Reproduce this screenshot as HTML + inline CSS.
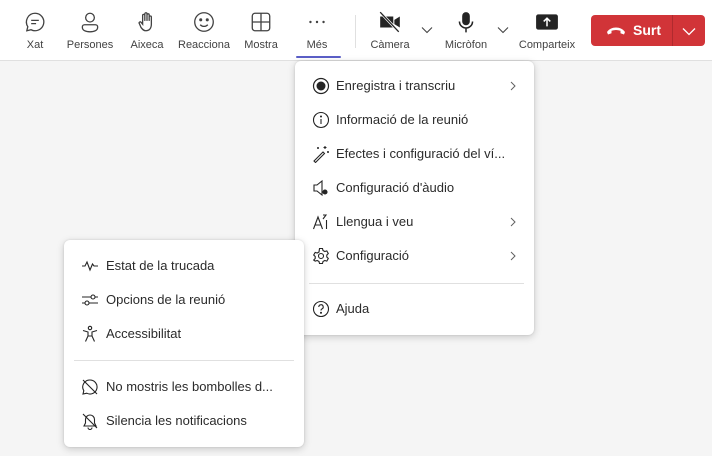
<!DOCTYPE html>
<html><head><meta charset="utf-8"><style>
*{box-sizing:border-box;margin:0;padding:0}
body{width:712px;height:456px;background:#f5f5f5;font-family:"Liberation Sans",sans-serif;color:#242424;position:relative;overflow:hidden}
.top{position:absolute;left:0;top:0;width:712px;height:61px;background:#fff;border-bottom:1px solid #e0e0e0}
.tb{position:absolute;top:0;width:60px;text-align:center}
.tb svg{position:absolute;top:10px;left:50%;margin-left:-12px}
.tb span{position:absolute;top:39px;left:0;width:100%;font-size:11px;color:#424242;white-space:nowrap}
.chev{position:absolute;top:26px}
.menu{position:absolute;background:#fff;border-radius:6px;box-shadow:0 2px 8px rgba(0,0,0,.18),0 0 2px rgba(0,0,0,.12)}
.it{position:absolute;left:0;right:0;height:34px;font-size:13px;line-height:34px;white-space:nowrap;color:#2b2b2b}
.it svg.ic{position:absolute;top:8px}
.it svg.gt{position:absolute;right:18px;top:12px}
.div{position:absolute;height:1px;background:#e0e0e0}
</style></head><body>
<div class="top">
 <div class="tb" style="left:5px"><svg width="24" height="24" viewBox="0 0 22 22" fill="none" stroke="#424242" stroke-width="1.2"><path d="M11 3a8 8 0 1 1-3.6 15.1L3.5 19l.9-3.7A8 8 0 0 1 11 3z"/><path d="M7.5 9.5h7M7.5 12.5h4.5"/></svg><span>Xat</span></div>
 <div class="tb" style="left:60px"><svg width="24" height="24" viewBox="0 0 22 22" fill="none" stroke="#424242" stroke-width="1.2"><circle cx="11" cy="7" r="4"/><path d="M4 15.5a2 2 0 0 1 2-2h10a2 2 0 0 1 2 2v.5c0 2.5-3 4-7 4s-7-1.5-7-4z"/></svg><span>Persones</span></div>
 <div class="tb" style="left:117px"><svg width="24" height="24" viewBox="0 0 22 22" fill="none" stroke="#424242" stroke-width="1.2"><path d="M7 11V5a1 1 0 0 1 2 0v5V3.5a1 1 0 0 1 2 0V10V4.5a1 1 0 0 1 2 0V10 6.5a1 1 0 0 1 2 0V13c0 4-2 6-5 6-2 0-3-1-4.5-3L4 12.5a1 1 0 0 1 1.6-1.2L7 13z"/></svg><span>Aixeca</span></div>
 <div class="tb" style="left:174px"><svg width="24" height="24" viewBox="0 0 22 22" fill="none" stroke="#424242" stroke-width="1.2"><circle cx="11" cy="11" r="8.5"/><circle cx="8" cy="9" r=".8" fill="#424242"/><circle cx="14" cy="9" r=".8" fill="#424242"/><path d="M7.5 13.5c2 2 5 2 7 0"/></svg><span>Reacciona</span></div>
 <div class="tb" style="left:231px"><svg width="24" height="24" viewBox="0 0 22 22" fill="none" stroke="#424242" stroke-width="1.2"><rect x="3" y="3" width="16" height="16" rx="2.5"/><path d="M11 3v16M3 11h16"/></svg><span>Mostra</span></div>
 <div class="tb" style="left:287px"><svg width="24" height="24" viewBox="0 0 22 22" fill="#424242"><circle cx="5" cy="11" r="1.1"/><circle cx="11" cy="11" r="1.1"/><circle cx="17" cy="11" r="1.1"/></svg><span>Més</span></div>
 <div style="position:absolute;left:296px;top:56px;width:45px;height:2px;background:#5b5fc7;border-radius:1px"></div>
 <div style="position:absolute;left:355px;top:15px;width:1px;height:33px;background:#e0e0e0"></div>
 <div class="tb" style="left:360px"><svg width="24" height="24" viewBox="0 0 22 22"><path d="M2 6h12v10H2zM15 9l5-3v10l-5-3z" fill="#242424"/><path d="M2 2l17 18" stroke="#fff" stroke-width="2.5"/><path d="M2 2l17 18" stroke="#242424" stroke-width="1.2"/></svg><span>Càmera</span></div>
 <svg class="chev" style="left:421px" width="12" height="8" viewBox="0 0 12 8" fill="none" stroke="#424242" stroke-width="1.1"><path d="M1 1.5l5 5 5-5"/></svg>
 <div class="tb" style="left:436px"><svg width="24" height="24" viewBox="0 0 22 22"><rect x="7.5" y="2" width="7" height="12" rx="3.5" fill="#242424"/><path d="M5 10.5a6 6 0 0 0 12 0M11 16.5v4" stroke="#242424" stroke-width="1.4" fill="none"/></svg><span>Micròfon</span></div>
 <svg class="chev" style="left:497px" width="12" height="8" viewBox="0 0 12 8" fill="none" stroke="#424242" stroke-width="1.1"><path d="M1 1.5l5 5 5-5"/></svg>
 <div class="tb" style="left:517px"><svg width="24" height="24" viewBox="0 0 22 22"><rect x="1" y="4" width="20" height="14" rx="2" fill="#242424"/><path d="M11 15V8M8 10.5l3-3 3 3" stroke="#fff" stroke-width="1.4" fill="none"/></svg><span>Comparteix</span></div>
 <div style="position:absolute;left:591px;top:15px;width:114px;height:31px;background:#d13438;border-radius:4px"></div>
 <div style="position:absolute;left:672px;top:15px;width:1px;height:31px;background:#b02a2e"></div>
 <svg style="position:absolute;left:606px;top:24px" width="20" height="12" viewBox="0 0 20 12"><path d="M1 8c4-6 14-6 18 0l-1 2.5-3.5-1.2V6.8c-3-1-6-1-9 0v2.5L2 10.5z" fill="#fff"/></svg>
 <div style="position:absolute;left:633px;top:22px;color:#fff;font-weight:bold;font-size:14px">Surt</div>
 <svg style="position:absolute;left:682px;top:27px" width="14" height="9" viewBox="0 0 14 9" fill="none" stroke="#fff" stroke-width="1.3"><path d="M1 1.5l6 6 6-6"/></svg>
</div>

<div class="menu" style="left:295px;top:61px;width:239px;height:274px">
 <div class="it" style="top:8px"><svg class="ic" style="left:17px" width="18" height="18" viewBox="0 0 18 18"><circle cx="9" cy="9" r="7.5" fill="none" stroke="#242424" stroke-width="1.2"/><circle cx="9" cy="9" r="4.5" fill="#242424"/></svg><span style="position:absolute;left:41px">Enregistra i transcriu</span><svg class="gt" width="6" height="10" viewBox="0 0 6 10" fill="none" stroke="#616161"><path d="M1 1l4 4-4 4"/></svg></div>
 <div class="it" style="top:42px"><svg class="ic" style="left:17px" width="18" height="18" viewBox="0 0 18 18" fill="none" stroke="#242424" stroke-width="1.1"><circle cx="9" cy="9" r="7.5"/><path d="M9 8v5"/><circle cx="9" cy="5.5" r=".5" fill="#242424"/></svg><span style="position:absolute;left:41px">Informació de la reunió</span></div>
 <div class="it" style="top:76px"><svg class="ic" style="left:17px" width="18" height="18" viewBox="0 0 18 18" fill="none" stroke="#242424" stroke-width="1.1"><path d="M2 16l9-9 1.5 1.5-9 9zM13 1v3M11.5 2.5h3M16 6v2M15 7h2M6 2v2M5 3h2"/></svg><span style="position:absolute;left:41px">Efectes i configuració del ví...</span></div>
 <div class="it" style="top:110px"><svg class="ic" style="left:17px" width="18" height="18" viewBox="0 0 18 18" fill="none" stroke="#242424" stroke-width="1.1"><path d="M2 6h3l5-4v14l-5-4H2z"/><circle cx="13" cy="13" r="2" fill="#242424"/></svg><span style="position:absolute;left:41px">Configuració d'àudio</span></div>
 <div class="it" style="top:144px"><svg class="ic" style="left:17px" width="18" height="18" viewBox="0 0 18 18" fill="none" stroke="#242424" stroke-width="1.1"><path d="M1.5 16L6 4l4.5 12M3.2 12h5.6M11 2h3l-3 4M14.5 7v9"/></svg><span style="position:absolute;left:41px">Llengua i veu</span><svg class="gt" width="6" height="10" viewBox="0 0 6 10" fill="none" stroke="#616161"><path d="M1 1l4 4-4 4"/></svg></div>
 <div class="it" style="top:178px"><svg class="ic" style="left:17px" width="18" height="18" viewBox="0 0 18 18" fill="none" stroke="#242424" stroke-width="1.1"><path d="M7.5 1.5h3l.5 2 1.8 1 2-.6 1.5 2.6-1.5 1.5v2l1.5 1.5-1.5 2.6-2-.6-1.8 1-.5 2h-3l-.5-2-1.8-1-2 .6L1.7 13l1.5-1.5v-2L1.7 8 3.2 5.4l2 .6 1.8-1z"/><circle cx="9" cy="9" r="2.5"/></svg><span style="position:absolute;left:41px">Configuració</span><svg class="gt" width="6" height="10" viewBox="0 0 6 10" fill="none" stroke="#616161"><path d="M1 1l4 4-4 4"/></svg></div>
 <div class="div" style="left:14px;right:10px;top:222px"></div>
 <div class="it" style="top:231px"><svg class="ic" style="left:17px" width="18" height="18" viewBox="0 0 18 18" fill="none" stroke="#242424" stroke-width="1.1"><circle cx="9" cy="9" r="7.5"/><path d="M6.8 7a2.2 2.2 0 1 1 3 2c-.6.3-.8.7-.8 1.5"/><circle cx="9" cy="12.8" r=".5" fill="#242424"/></svg><span style="position:absolute;left:41px">Ajuda</span></div>
</div>

<div class="menu" style="left:64px;top:240px;width:240px;height:207px">
 <div class="it" style="top:9px"><svg class="ic" style="left:17px" width="18" height="18" viewBox="0 0 18 18" fill="none" stroke="#242424" stroke-width="1.1"><path d="M1 9h3l2-4 3 8 2.5-6 1.5 2h4"/></svg><span style="position:absolute;left:42px">Estat de la trucada</span></div>
 <div class="it" style="top:43px"><svg class="ic" style="left:17px" width="18" height="18" viewBox="0 0 18 18" fill="none" stroke="#242424" stroke-width="1.1"><path d="M1 6h9M14 6h3M1 12h3M8 12h9"/><circle cx="12" cy="6" r="2"/><circle cx="6" cy="12" r="2"/></svg><span style="position:absolute;left:42px">Opcions de la reunió</span></div>
 <div class="it" style="top:77px"><svg class="ic" style="left:17px" width="18" height="18" viewBox="0 0 18 18" fill="none" stroke="#242424" stroke-width="1.1"><circle cx="9" cy="3" r="1.7"/><path d="M2 5.5l5 1.5v4l-2.5 5.5M16 5.5L11 7v4l2.5 5.5M7 11h4"/></svg><span style="position:absolute;left:42px">Accessibilitat</span></div>
 <div class="div" style="left:10px;right:10px;top:120px"></div>
 <div class="it" style="top:130px"><svg class="ic" style="left:17px" width="18" height="18" viewBox="0 0 18 18" fill="none" stroke="#242424" stroke-width="1.1"><path d="M9 2a7 7 0 1 1-3.2 13.2L2 16l.8-3.3A7 7 0 0 1 9 2zM2 2l14 14"/></svg><span style="position:absolute;left:42px">No mostris les bombolles d...</span></div>
 <div class="it" style="top:164px"><svg class="ic" style="left:17px" width="18" height="18" viewBox="0 0 18 18" fill="none" stroke="#242424" stroke-width="1.1"><path d="M4.5 7.5a4.5 4.5 0 0 1 9 0v3.5l1.5 3H3l1.5-3zM7 15.5a2 2 0 0 0 4 0M2 2l14 14"/></svg><span style="position:absolute;left:42px">Silencia les notificacions</span></div>
</div>
</body></html>
